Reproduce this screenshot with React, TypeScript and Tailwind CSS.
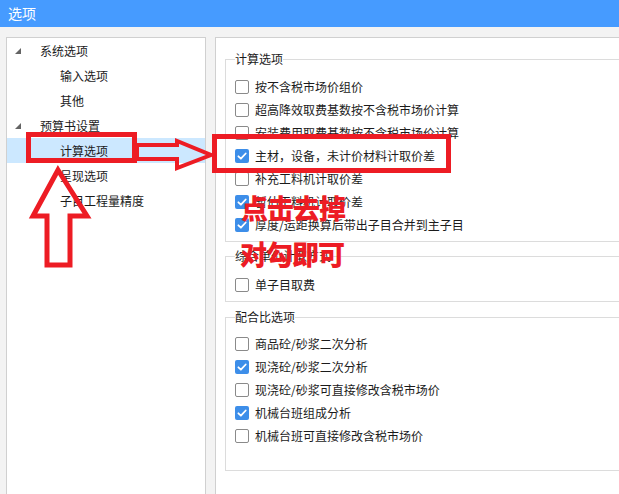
import React from "react";

type Opt = { label: string; checked?: boolean };

const calcOptions: Opt[] = [
  { label: "按不含税市场价组价" },
  { label: "超高降效取费基数按不含税市场价计算" },
  { label: "安装费用取费基数按不含税市场价计算" },
  { label: "主材，设备，未计价材料计取价差", checked: true },
  { label: "补充工料机计取价差" },
  { label: "暂估工料机计取价差", checked: true },
  { label: "厚度/运距换算后带出子目合并到主子目", checked: true },
];

const mixOptions: Opt[] = [
  { label: "商品砼/砂浆二次分析" },
  { label: "现浇砼/砂浆二次分析", checked: true },
  { label: "现浇砼/砂浆可直接修改含税市场价" },
  { label: "机械台班组成分析", checked: true },
  { label: "机械台班可直接修改含税市场价" },
];

function Checkbox({ checked }: { checked?: boolean }) {
  if (checked) {
    return (
      <span className="flex h-[14px] w-[14px] shrink-0 items-center justify-center rounded-[2px] bg-[#3d8ee9]">
        <svg width="14" height="14" viewBox="0 0 14 14">
          <path d="M3.4 7.3 L5.9 9.7 L10.7 4.5" fill="none" stroke="#fff" strokeWidth="1.8" strokeLinecap="round" strokeLinejoin="round" />
        </svg>
      </span>
    );
  }
  return <span className="h-[14px] w-[14px] shrink-0 rounded-[2px] border border-[#8a8a8a] bg-white" />;
}

function Row({ opt }: { opt: Opt }) {
  return (
    <div className="flex h-[23px] items-center gap-[6px]">
      <Checkbox checked={opt.checked} />
      <span className="whitespace-nowrap">{opt.label}</span>
    </div>
  );
}

function Group({ title, className, children }: { title: string; className: string; children: React.ReactNode }) {
  return (
    <fieldset className={`border border-[#dcdcdc] pl-[9px] ${className}`}>
      <legend className="leading-[16px]">{title}</legend>
      {children}
    </fieldset>
  );
}

function Expander() {
  return (
    <svg width="6" height="6" viewBox="0 0 6 6" className="shrink-0">
      <polygon points="6,0 6,6 0,6" fill="#646464" />
    </svg>
  );
}

export default function App() {
  return (
    <div className="relative flex h-[494px] w-[619px] flex-col overflow-hidden bg-[#f3f3f3] font-['Noto_Sans_CJK_SC','Microsoft_YaHei',sans-serif] text-[12px] text-[#1b1b1b]">
      <div className="flex h-[27px] shrink-0 items-center bg-[#469bff] pl-[8px] text-[14px] text-white">选项</div>

      <div className="flex gap-[9px] pl-[6px] pt-[10px]">
        {/* tree */}
        <div className="h-[470px] w-[200px] shrink-0 border border-[#d0d0d0] bg-white">
          <div className="flex h-[25px] items-center pl-[8px]">
            <Expander />
            <span className="ml-[19px]">系统选项</span>
          </div>
          <div className="flex h-[25px] items-center pl-[53px]">输入选项</div>
          <div className="flex h-[25px] items-center pl-[53px]">其他</div>
          <div className="flex h-[25px] items-center pl-[8px]">
            <Expander />
            <span className="ml-[19px]">预算书设置</span>
          </div>
          <div className="flex h-[25px] items-center bg-[#cce8ff] pl-[53px]">计算选项</div>
          <div className="flex h-[25px] items-center pl-[53px]">呈现选项</div>
          <div className="flex h-[25px] items-center pl-[53px]">子目工程量精度</div>
        </div>

        {/* settings */}
        <div className="h-[470px] w-[440px] shrink-0 border border-[#d0d0d0] bg-white pl-[9px] pr-[9px] pt-[13px]">
          <Group title="计算选项" className="pb-[5px] pt-[8px]">
            {calcOptions.map((o) => (
              <Row key={o.label} opt={o} />
            ))}
          </Group>
          <Group title="综合单价计取方式" className="mt-[6px] pb-[5px] pt-[9px]">
            <Row opt={{ label: "单子目取费" }} />
          </Group>
          <Group title="配合比选项" className="mt-[7px] pb-[23px] pt-[7px]">
            {mixOptions.map((o) => (
              <Row key={o.label} opt={o} />
            ))}
          </Group>
        </div>
      </div>

      {/* red annotations */}
      <svg className="pointer-events-none absolute left-0 top-0" width="619" height="494">
        <rect x="28.5" y="134.5" width="106" height="26" fill="none" stroke="#ed1c24" strokeWidth="5" />
        <rect x="214.5" y="136.5" width="234" height="34" fill="none" stroke="#ed1c24" strokeWidth="5" />
        <polygon points="137,145 177,145 177,141 211,155 177,168 177,159 137,159" fill="none" stroke="#ed1c24" strokeWidth="4" strokeLinejoin="miter" />
        <polygon points="58,170 87,216 70,216 70,265 47,265 47,216 33,216" fill="none" stroke="#ed1c24" strokeWidth="5" strokeLinejoin="miter" />
      </svg>
      <div className="pointer-events-none absolute left-[241px] top-[194px] text-[27px] font-black leading-[27px] tracking-[-1px] text-[#ed1c24]">点击去掉</div>
      <div className="pointer-events-none absolute left-[240px] top-[240px] text-[27px] font-black leading-[27px] tracking-[-1px] text-[#ed1c24]">对勾即可</div>
    </div>
  );
}
